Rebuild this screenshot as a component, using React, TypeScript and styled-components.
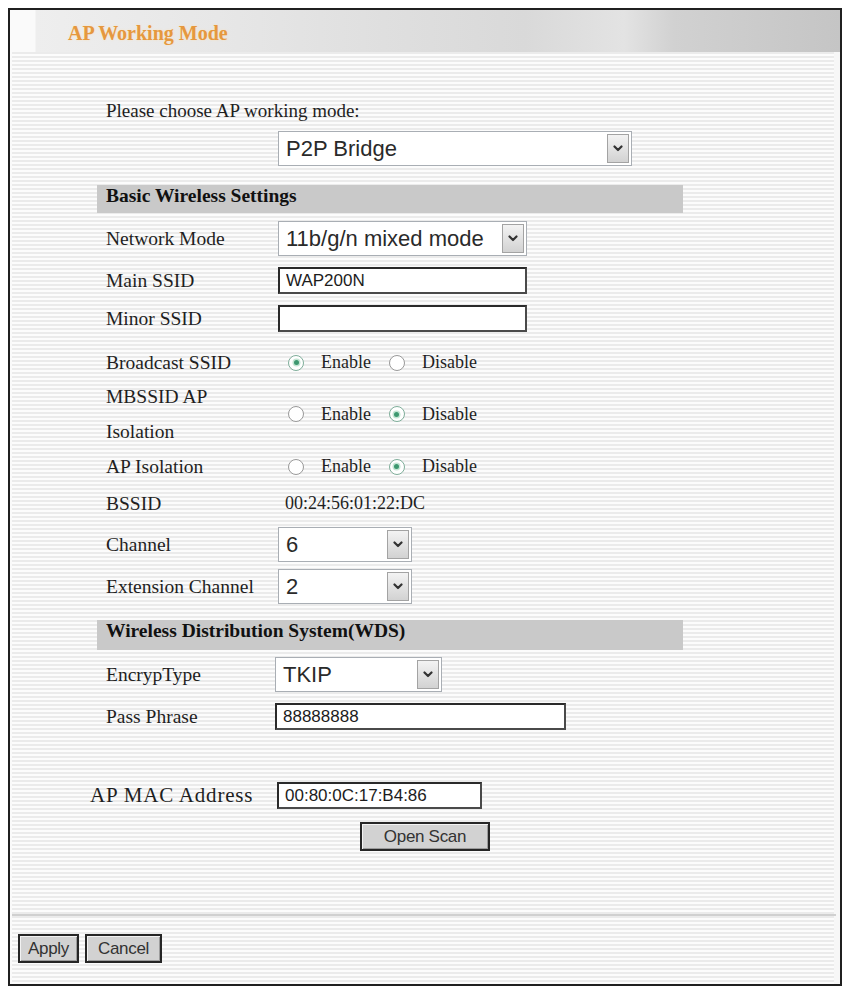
import React from "react";
import styled, { createGlobalStyle } from "styled-components";

const GlobalStyle = createGlobalStyle`
  html, body {
    margin: 0;
    padding: 0;
    overflow: hidden;
    background: #ffffff;
  }
  body {
    padding: 8px 0 0 8px;
    font-family: "Liberation Serif", "Times New Roman", serif;
    color: #1f1f1f;
  }
`;

const Frame = styled.div`
  box-sizing: border-box;
  width: 834px;
  height: 978px;
  border: 2px solid #202020;
  display: flex;
  flex-direction: column;
  background: repeating-linear-gradient(
    to bottom,
    #fcfcfc 0,
    #fcfcfc 2px,
    #ebebeb 2px,
    #ebebeb 4px
  );
  box-shadow: inset 2px 0 0 #fafafa, inset -6px 0 0 #f7f7f7;
`;

const Header = styled.div`
  flex: none;
  height: 42px;
  display: flex;
  align-items: center;
  padding: 5px 0 0 58px;
  box-sizing: border-box;
  background: linear-gradient(
    to right,
    #fafafa 0,
    #fafafa 25px,
    #eeeeee 26px,
    #e7e7e7 25%,
    #dfdfdf 45%,
    #d9d9d9 62%,
    #e3e3e3 74%,
    #d1d1d1 80%,
    #c5c5c5 100%
  );
`;

const Title = styled.h1`
  margin: 0;
  font: bold 20px "Liberation Serif", "Times New Roman", serif;
  color: #e5983f;
  text-shadow: 0 0 2px rgba(255, 225, 180, 0.9);
`;

const Form = styled.div<{ $top: number; $left: number }>`
  margin: ${(p) => p.$top}px 0 0 ${(p) => p.$left}px;
  width: 586px;
  display: flex;
  flex-direction: column;
`;

const Prompt = styled.div`
  height: 30px;
  line-height: 30px;
  padding-left: 9px;
  font-size: 19px;
`;

const Row = styled.div<{ $h: number; $label?: number }>`
  display: grid;
  grid-template-columns: ${(p) => p.$label ?? 181}px 1fr;
  align-items: center;
  height: ${(p) => p.$h}px;
`;

const Label = styled.div<{ $size?: number; $spacing?: number }>`
  padding-left: 9px;
  font-size: ${(p) => p.$size ?? 19.5}px;
  line-height: 35px;
  letter-spacing: ${(p) => p.$spacing ?? 0}px;
  white-space: nowrap;
`;

const SectionBar = styled.div<{ $mt: number; $h: number }>`
  margin-top: ${(p) => p.$mt}px;
  height: ${(p) => p.$h}px;
  line-height: ${(p) => p.$h}px;
  padding-left: 9px;
  background: #c9c9c9;
  font: bold 19.5px "Liberation Serif", "Times New Roman", serif;
  color: #111;
`;

const SelectBox = styled.div<{ $w: number }>`
  box-sizing: border-box;
  width: ${(p) => p.$w}px;
  height: 35px;
  display: flex;
  align-items: stretch;
  border: 1px solid #a9aeb4;
  background: #ffffff;
`;

const SelectText = styled.span`
  flex: 1;
  padding-left: 7px;
  font: 22px "Liberation Sans", Arial, sans-serif;
  line-height: 33px;
  color: #2a2a2a;
  white-space: nowrap;
  overflow: hidden;
`;

const DropButton = styled.span`
  flex: none;
  width: 22px;
  margin: 2px;
  box-sizing: border-box;
  border: 1px solid #a3a3a3;
  background: linear-gradient(to bottom, #f3f3f3, #d2d2d2);
  display: flex;
  align-items: center;
  justify-content: center;
`;

const TextField = styled.input<{ $w: number }>`
  box-sizing: border-box;
  width: ${(p) => p.$w}px;
  height: 27px;
  margin: 0;
  padding: 0 0 0 6px;
  border: 2px solid #2a2a2a;
  border-right-color: #4a4a4a;
  border-bottom-color: #4a4a4a;
  background: #ffffff;
  font: 17px "Liberation Sans", Arial, sans-serif;
  color: #1c1c1c;
  outline: none;
`;

const RadioGroup = styled.div`
  display: flex;
  align-items: center;
  padding-left: 10px;
`;

const RadioOption = styled.label`
  display: flex;
  align-items: center;
  gap: 17px;
  margin-right: 18px;
  font-size: 18px;
`;

const RadioCircle = styled.span<{ $on: boolean }>`
  box-sizing: border-box;
  width: 16px;
  height: 16px;
  border-radius: 50%;
  border: 1.5px solid ${(p) => (p.$on ? "#7fae9a" : "#999999")};
  background: #ffffff;
  display: flex;
  align-items: center;
  justify-content: center;
`;

const RadioDot = styled.span`
  width: 5px;
  height: 5px;
  border-radius: 50%;
  background: #3d9870;
  box-shadow: 0 0 0 1.5px #c4e6d4;
`;

const Value = styled.span`
  padding-left: 7px;
  font-size: 18px;
`;

const MacRow = styled.div`
  margin-top: 45px;
  height: 28px;
  padding-left: 71px;
  display: grid;
  grid-template-columns: 196px auto;
  justify-content: start;
  align-items: center;
`;

const CenterRow = styled.div<{ $mt: number }>`
  margin-top: ${(p) => p.$mt}px;
  display: flex;
  justify-content: center;
`;

const PushButton = styled.button<{ $w: number }>`
  box-sizing: border-box;
  width: ${(p) => p.$w}px;
  height: 29px;
  padding: 0;
  border: 2px solid #262626;
  background: #d2d2d2;
  box-shadow: inset 1px 1px 0 #f2f2f2, inset -1px -1px 0 #9c9c9c;
  font: 17px "Liberation Sans", Arial, sans-serif;
  color: #333333;
  letter-spacing: -0.3px;
`;

const Separator = styled.div`
  margin: 63px 4px 0 2px;
  height: 2px;
  background: #d0d0d0;
`;

const ActionBar = styled.div`
  margin-top: 18px;
  padding-left: 8px;
  display: flex;
  gap: 6px;
`;

const Chevron = () => (
  <svg width="10" height="7" viewBox="0 0 10 7">
    <polyline
      points="1.5,1.5 5,5 8.5,1.5"
      fill="none"
      stroke="#333"
      strokeWidth="2.2"
      strokeLinecap="round"
      strokeLinejoin="round"
    />
  </svg>
);

const Select = ({ value, width }: { value: string; width: number }) => (
  <SelectBox $w={width}>
    <SelectText>{value}</SelectText>
    <DropButton>
      <Chevron />
    </DropButton>
  </SelectBox>
);

const Radio = ({ text, on }: { text: string; on: boolean }) => (
  <RadioOption>
    <RadioCircle $on={on}>{on && <RadioDot />}</RadioCircle>
    {text}
  </RadioOption>
);

const EnableDisable = ({ enabled }: { enabled: boolean }) => (
  <RadioGroup>
    <Radio text="Enable" on={enabled} />
    <Radio text="Disable" on={!enabled} />
  </RadioGroup>
);

export default function App() {
  return (
    <>
      <GlobalStyle />
      <Frame>
        <Header>
          <Title>AP Working Mode</Title>
        </Header>

        <Form $top={44} $left={87}>
          <Prompt>Please choose AP working mode:</Prompt>
          <Row $h={44}>
            <span />
            <Select value="P2P Bridge" width={354} />
          </Row>

          <SectionBar $mt={15} $h={28}>Basic Wireless Settings</SectionBar>
          <Row $h={50}>
            <Label>Network Mode</Label>
            <Select value="11b/g/n mixed mode" width={249} />
          </Row>
          <Row $h={28}>
            <Label>Main SSID</Label>
            <TextField $w={249} defaultValue="WAP200N" />
          </Row>
          <Row $h={54}>
            <Label>Minor SSID</Label>
            <TextField $w={249} defaultValue="" />
          </Row>
          <Row $h={34}>
            <Label>Broadcast SSID</Label>
            <EnableDisable enabled />
          </Row>
          <Row $h={70}>
            <Label>
              MBSSID AP
              <br />
              Isolation
            </Label>
            <EnableDisable enabled={false} />
          </Row>
          <Row $h={34}>
            <Label>AP Isolation</Label>
            <EnableDisable enabled={false} />
          </Row>
          <Row $h={40}>
            <Label>BSSID</Label>
            <Value>00:24:56:01:22:DC</Value>
          </Row>
          <Row $h={42}>
            <Label>Channel</Label>
            <Select value="6" width={134} />
          </Row>
          <Row $h={42}>
            <Label>Extension Channel</Label>
            <Select value="2" width={134} />
          </Row>

          <SectionBar $mt={13} $h={30}>Wireless Distribution System(WDS)</SectionBar>
          <Row $h={49} $label={178}>
            <Label>EncrypType</Label>
            <Select value="TKIP" width={167} />
          </Row>
          <Row $h={34} $label={178}>
            <Label>Pass Phrase</Label>
            <TextField $w={291} defaultValue="88888888" />
          </Row>
        </Form>

        <MacRow>
          <Label $size={21} $spacing={0.8}>AP MAC Address</Label>
          <TextField $w={205} defaultValue="00:80:0C:17:B4:86" />
        </MacRow>
        <CenterRow $mt={16}>
          <PushButton $w={130} type="button">Open Scan</PushButton>
        </CenterRow>

        <Separator />
        <ActionBar>
          <PushButton $w={61} type="button">Apply</PushButton>
          <PushButton $w={77} type="button">Cancel</PushButton>
        </ActionBar>
      </Frame>
    </>
  );
}
